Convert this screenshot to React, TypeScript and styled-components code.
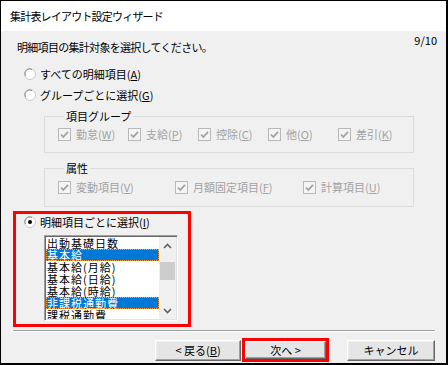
import styled, { createGlobalStyle } from 'styled-components';

const GlobalStyle = createGlobalStyle`
  body {
    margin: 0;
    font-family: "Noto Sans CJK JP", "Noto Sans", sans-serif;
    color: #000;
  }
`;

const Window = styled.div`
  width: 448px;
  height: 365px;
  box-sizing: border-box;
  border: 1px solid #000;
  border-right-width: 2px;
  border-bottom-width: 2px;
  display: flex;
  flex-direction: column;
  background: #f0f0f0;
  font-size: 11px;
`;

const TitleBar = styled.div`
  height: 30px;
  line-height: 30px;
  background: #fff;
  padding-left: 9px;
  font-size: 11px;
  letter-spacing: -0.8px;
`;

const Header = styled.div`
  display: flex;
  justify-content: space-between;
  padding: 0 9px 0 16px;
`;

const Instruction = styled.div`
  margin-top: 8px;
  line-height: 16px;
  letter-spacing: -0.7px;
`;

const PageNo = styled.div`
  margin-top: 1px;
  line-height: 16px;
`;

const RadioRow = styled.div<{ $top: number; $indent: number; $h?: number }>`
  display: flex;
  align-items: center;
  gap: 4px;
  height: ${p => p.$h ?? 16}px;
  margin-top: ${p => p.$top}px;
  padding-left: ${p => p.$indent}px;
`;

const Group = styled.fieldset<{ $top: number; $pt: number; $pb: number }>`
  margin: ${p => p.$top}px 0 0 43px;
  width: 370px;
  box-sizing: border-box;
  border: 1px solid #dcdcdc;
  padding: ${p => p.$pt}px 0 ${p => p.$pb}px 13px;
  min-inline-size: 0;
`;

const Legend = styled.legend`
  margin-left: 6px;
  padding: 0 2px;
  line-height: 16px;
  font-size: 11px;
`;

const CheckRow = styled.div<{ $cols: string }>`
  display: grid;
  grid-template-columns: ${p => p.$cols};
  height: 16px;
  align-items: center;
`;

const CheckItem = styled.div`
  display: flex;
  align-items: center;
  gap: 5px;
  color: #a2a2a2;
  white-space: nowrap;
`;

const Highlight = styled.div<{ $w: number; $h: number; $top?: number; $left?: number }>`
  box-sizing: border-box;
  width: ${p => p.$w}px;
  height: ${p => p.$h}px;
  margin-top: ${p => p.$top ?? 0}px;
  margin-left: ${p => p.$left ?? 0}px;
  border: 3px solid #ff0000;
`;

const DetailBox = styled(Highlight)`
  padding: 0 0 3px 8px;
`;

const ListBox = styled.div`
  display: flex;
  width: 134px;
  height: 86px;
  box-sizing: border-box;
  margin: 6px 0 0 20px;
  border: 1px solid;
  border-color: #a0a0a0 #fff #fff #a0a0a0;
  box-shadow: inset 1px 1px 0 #696969, inset -1px -1px 0 #e3e3e3;
  padding: 1px;
  background: #fff;
  overflow: hidden;
`;

const Items = styled.div`
  flex: 1;
  overflow: hidden;
`;

const Item = styled.div<{ $sel?: boolean }>`
  height: 12px;
  line-height: 12px;
  font-size: 11px;
  letter-spacing: 1px;
  padding-left: 1px;
  white-space: nowrap;
  background: ${p => (p.$sel ? '#0078d7' : 'transparent')};
  color: ${p => (p.$sel ? '#fff' : '#000')};
  outline: ${p => (p.$sel ? '1px dotted #f0a040' : 'none')};
  outline-offset: -1px;
`;

const ScrollBar = styled.div`
  width: 17px;
  display: flex;
  flex-direction: column;
  background: #f0f0f0;
`;

const ScrollBtn = styled.div`
  height: 17px;
  display: flex;
  align-items: center;
  justify-content: center;
`;

const Track = styled.div`
  flex: 1;
  padding-top: 8px;
`;

const Thumb = styled.div`
  margin: 0 auto;
  width: 15px;
  height: 18px;
  background: #cdcdcd;
`;

const Separator = styled.div`
  height: 0;
  margin: 3px 11px 0 12px;
  border-top: 1px solid #a0a0a0;
  border-bottom: 1px solid #fff;
`;

const ButtonRow = styled.div`
  display: flex;
  justify-content: flex-end;
  align-items: center;
  gap: 1px;
  height: 24px;
  margin-top: 6px;
  padding-right: 11px;
`;

const Button = styled.button<{ $w: number; $h?: number; $ml?: number }>`
  box-sizing: border-box;
  width: ${p => p.$w}px;
  height: ${p => p.$h ?? 21}px;
  margin: 0 0 0 ${p => p.$ml ?? 0}px;
  padding: 0;
  font-family: inherit;
  font-size: 11px;
  color: #000;
  background: #e5e5e5;
  border: 1px solid;
  border-color: #fff #696969 #696969 #fff;
  box-shadow: inset -1px -1px 0 #a0a0a0, inset 1px 1px 0 #f0f0f0;
`;

function Radio({ checked }: { checked?: boolean }) {
  return (
    <svg width="12" height="12" viewBox="0 0 12 12">
      <circle cx="6" cy="6" r="5.5" fill="#fff" stroke="#c8c8c8" />
      <path d="M1.5 8 A4.8 4.8 0 0 1 8 1.5" fill="none" stroke="#8c8c8c" />
      {checked && <circle cx="6" cy="6" r="2" fill="#000" />}
    </svg>
  );
}

function Check() {
  return (
    <svg width="13" height="13" viewBox="0 0 13 13">
      <rect x="0.5" y="0.5" width="12" height="12" fill="#f4f4f4" stroke="#b8b8b8" />
      <path d="M3 6.5 L5.3 9 L10 3.8" fill="none" stroke="#a0a0a0" strokeWidth="1.8" />
    </svg>
  );
}

function Chevron({ up }: { up?: boolean }) {
  return (
    <svg width="9" height="6" viewBox="0 0 9 6">
      <path d={up ? 'M1 5 L4.5 1.5 L8 5' : 'M1 1 L4.5 4.5 L8 1'} fill="none" stroke="#606060" strokeWidth="1.6" />
    </svg>
  );
}

const groupItems = [
  ['勤怠(', 'W', ')'],
  ['支給(', 'P', ')'],
  ['控除(', 'C', ')'],
  ['他(', 'O', ')'],
  ['差引(', 'K', ')'],
];

const attrItems = [
  ['変動項目(', 'V', ')'],
  ['月額固定項目(', 'F', ')'],
  ['計算項目(', 'U', ')'],
];

const listItems = [
  { label: '出動基礎日数' },
  { label: '基本給', sel: true },
  { label: '基本給(月給)' },
  { label: '基本給(日給)' },
  { label: '基本給(時給)' },
  { label: '非課税通勤費', sel: true },
  { label: '課税通勤費' },
];

export default function App() {
  return (
    <>
      <GlobalStyle />
      <Window>
        <TitleBar>集計表レイアウト設定ウィザード</TitleBar>
        <Header>
          <Instruction>明細項目の集計対象を選択してください。</Instruction>
          <PageNo>9/10</PageNo>
        </Header>

        <RadioRow $top={11} $indent={23}>
          <Radio />
          <span>すべての明細項目(<u>A</u>)</span>
        </RadioRow>
        <RadioRow $top={5} $indent={23}>
          <Radio />
          <span>グループごとに選択(<u>G</u>)</span>
        </RadioRow>

        <Group $top={5} $pt={2} $pb={10}>
          <Legend>項目グループ</Legend>
          <CheckRow $cols="70px 70px 70px 70px 70px">
            {groupItems.map(([a, k, b]) => (
              <CheckItem key={k}>
                <Check />
                <span>{a}<u>{k}</u>{b}</span>
              </CheckItem>
            ))}
          </CheckRow>
        </Group>

        <Group $top={7} $pt={3} $pb={11}>
          <Legend>属性</Legend>
          <CheckRow $cols="117px 128px 100px">
            {attrItems.map(([a, k, b]) => (
              <CheckItem key={k}>
                <Check />
                <span>{a}<u>{k}</u>{b}</span>
              </CheckItem>
            ))}
          </CheckRow>
        </Group>

        <DetailBox $w={178} $h={116} $top={4} $left={12}>
          <RadioRow $top={0} $indent={0} $h={15}>
            <Radio checked />
            <span>明細項目ごとに選択(<u>I</u>)</span>
          </RadioRow>
          <ListBox>
            <Items>
              {listItems.map(it => (
                <Item key={it.label} $sel={it.sel}>{it.label}</Item>
              ))}
            </Items>
            <ScrollBar>
              <ScrollBtn><Chevron up /></ScrollBtn>
              <Track><Thumb /></Track>
              <ScrollBtn><Chevron /></ScrollBtn>
            </ScrollBar>
          </ListBox>
        </DetailBox>

        <Separator />

        <ButtonRow>
          <Button $w={86}>&lt; 戻る(<u>B</u>)</Button>
          <Highlight $w={87} $h={24}>
            <Button $w={81} $h={18}>次へ &gt;</Button>
          </Highlight>
          <Button $w={88} $ml={17}>キャンセル</Button>
        </ButtonRow>
      </Window>
    </>
  );
}
